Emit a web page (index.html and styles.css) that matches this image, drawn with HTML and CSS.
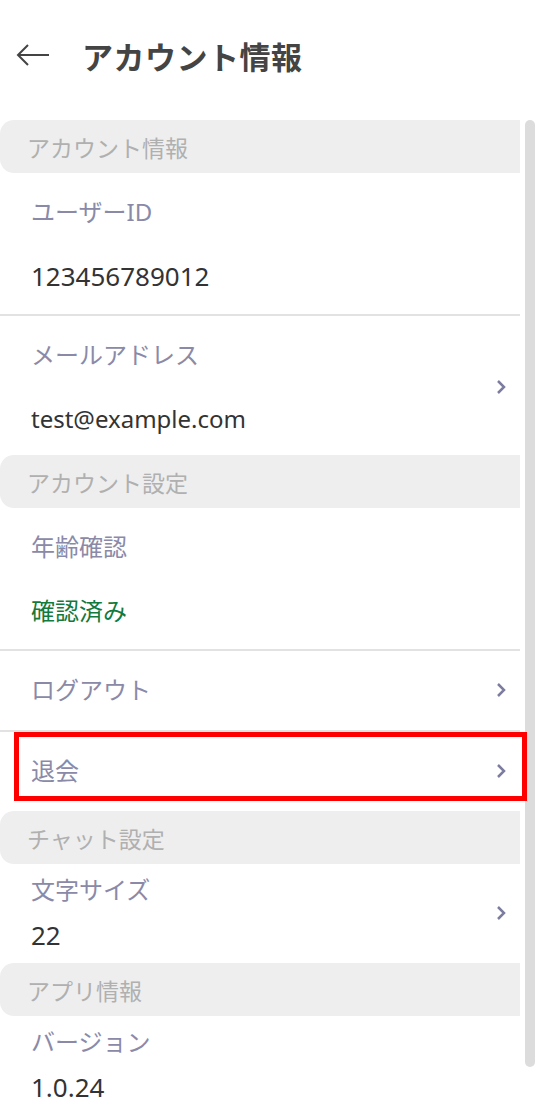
FILE: index.html
```html
<!DOCTYPE html>
<html lang="ja">
<head>
  <meta charset="UTF-8">
  <meta name="viewport" content="width=device-width, initial-scale=1.0">
  <title>アカウント情報</title>
  <link rel="stylesheet" href="styles.css">
</head>
<body>
  <header class="topbar">
    <svg class="back" width="36" height="24" viewBox="0 0 36 24">
      <path d="M34 12H3M13 2L3 12l10 10" fill="none" stroke="#444" stroke-width="2"/>
    </svg>
    <h1>アカウント情報</h1>
  </header>

  <div class="page">
    <div class="list">
      <div class="section">アカウント情報</div>
      <div class="item">
        <div class="texts">
          <div class="label">ユーザーID</div>
          <div class="value num">123456789012</div>
        </div>
      </div>
      <div class="item item-link mail">
        <div class="texts">
          <div class="label">メールアドレス</div>
          <div class="value">test@example.com</div>
        </div>
        <svg class="chev" width="10" height="16" viewBox="0 0 10 16"><path d="M2 2l6 6-6 6" fill="none" stroke="currentColor" stroke-width="2.5"/></svg>
      </div>

      <div class="section">アカウント設定</div>
      <div class="item">
        <div class="texts">
          <div class="label">年齢確認</div>
          <div class="value ok">確認済み</div>
        </div>
      </div>
      <div class="item item-link single">
        <div class="label">ログアウト</div>
        <svg class="chev" width="10" height="16" viewBox="0 0 10 16"><path d="M2 2l6 6-6 6" fill="none" stroke="currentColor" stroke-width="2.5"/></svg>
      </div>
      <div class="item item-link single last">
        <div class="label">退会</div>
        <svg class="chev" width="10" height="16" viewBox="0 0 10 16"><path d="M2 2l6 6-6 6" fill="none" stroke="currentColor" stroke-width="2.5"/></svg>
        <div class="highlight"></div>
      </div>

      <div class="section">チャット設定</div>
      <div class="item item-link compact last">
        <div class="texts">
          <div class="label">文字サイズ</div>
          <div class="value num">22</div>
        </div>
        <svg class="chev" width="10" height="16" viewBox="0 0 10 16"><path d="M2 2l6 6-6 6" fill="none" stroke="currentColor" stroke-width="2.5"/></svg>
      </div>

      <div class="section">アプリ情報</div>
      <div class="item compact last">
        <div class="texts">
          <div class="label">バージョン</div>
          <div class="value num">1.0.24</div>
        </div>
      </div>
    </div>
    <div class="scrollbar"></div>
  </div>
</body>
</html>
```

FILE: styles.css
```css
body {
  margin: 0;
  height: 1110px;
  overflow: hidden;
  background: #fff;
  font-family: "Noto Sans", "Noto Sans CJK JP", sans-serif;
  color: #333;
}
.topbar {
  height: 120px;
  display: flex;
  align-items: center;
  padding: 0 0 10px 15px;
  box-sizing: border-box;
}
.back {
  flex: none;
}
.topbar h1 {
  margin: 0 0 0 31px;
  font-size: 31px;
  font-weight: 700;
  color: #444;
  letter-spacing: 0.5px;
}
.page {
  display: flex;
  align-items: flex-start;
}
.list {
  width: 520px;
  flex: none;
}
.scrollbar {
  width: 10px;
  height: 947px;
  margin-left: 5px;
  background: #dcdcdc;
  border-radius: 5px;
}
.section {
  height: 53px;
  display: flex;
  align-items: center;
  padding-left: 27px;
  background: #eeeeee;
  border-radius: 14px 0 0 14px;
  font-size: 23px;
  color: #b0b0b0;
}
.item {
  position: relative;
  display: flex;
  align-items: center;
  padding: 23px 14px 22px 31px;
  border-bottom: 2px solid #e2e2e2;
}
.item.last,
.item.mail {
  border-bottom: none;
}
.item.mail {
  padding-bottom: 20px;
}
.texts {
  flex: 1;
  display: flex;
  flex-direction: column;
  gap: 32px;
}
.label {
  flex: 1;
  font-size: 24px;
  line-height: 32px;
  color: #8a8aa8;
}
.value {
  font-size: 24px;
  line-height: 32px;
  color: #333;
}
.value.num {
  font-size: 26px;
}
.value.ok {
  color: #127a3c;
}
.single {
  padding-top: 23px;
  padding-bottom: 24px;
}
.compact {
  padding-top: 10px;
  padding-bottom: 12px;
}
.compact .texts {
  gap: 13px;
}
.chev {
  flex: none;
  color: #7c7ca0;
}
.highlight {
  position: absolute;
  left: 14px;
  top: 0;
  width: 513px;
  height: 69px;
  border: 5px solid #ff0000;
  box-sizing: border-box;
}
```
